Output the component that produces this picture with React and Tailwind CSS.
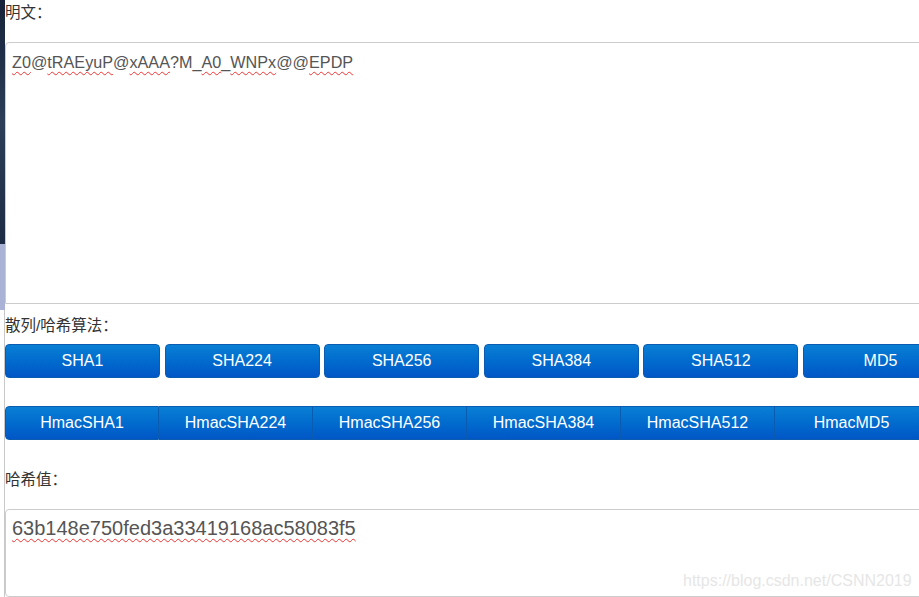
import React from 'react';

const font = { fontFamily: '"Liberation Sans", Arial, "Noto Sans CJK SC", sans-serif' };

const algos = ['SHA1', 'SHA224', 'SHA256', 'SHA384', 'SHA512', 'MD5'];
const hmacs = ['HmacSHA1', 'HmacSHA224', 'HmacSHA256', 'HmacSHA384', 'HmacSHA512', 'HmacMD5'];

// 拼写检查的红色波浪线
const Sq = ({ children }) => (
    <span className="underline decoration-wavy decoration-[#e33] decoration-1 underline-offset-[3px]">{children}</span>
);

const App = () => {
    return (
        <div className="w-[919px] h-[597px] overflow-hidden flex bg-white text-[#333]" style={font}>

            {/* 左侧露出的桌面背景 */}
            <div className="w-[5px] shrink-0 flex flex-col">
                <div className="h-[244px] bg-gradient-to-b from-[#16233a] via-[#2c3e58] to-[#1d2c44]"></div>
                <div className="h-[66px] bg-[#aab3d6]"></div>
                <div className="flex-1 bg-white border-r border-[#c8c8c8]"></div>
            </div>

            <div className="w-[960px] shrink-0 flex flex-col">
                <div className="h-[42px] pt-[3px] text-[15.5px] leading-[20px]">明文：</div>

                <div className="h-[262px] border border-[#cccccc] rounded-tl-[4px] px-[6px] pt-[8px] text-[16.2px] leading-[22px] text-[#555]">
                    <Sq>Z0</Sq>@<Sq>tRAEyuP</Sq>@<Sq>xAAA</Sq>?M_<Sq>A0</Sq>_<Sq>WNPx</Sq>@@<Sq>EPDP</Sq>
                </div>

                <div className="h-[40px] pt-[12px] text-[15.5px] leading-[20px]">散列/哈希算法：</div>

                <div className="flex gap-[4.6px]">
                    {algos.map((a) => (
                        <button
                            key={a}
                            className="w-[155px] h-[34px] shrink-0 rounded-[4px] border border-[#0a5cb0] bg-gradient-to-b from-[#0a7fd5] to-[#0256c6] text-white text-[16px]"
                        >
                            {a}
                        </button>
                    ))}
                </div>

                <div className="h-[28px]"></div>

                <div className="flex">
                    {hmacs.map((h, i) => (
                        <button
                            key={h}
                            className={`w-[154px] h-[34px] shrink-0 border-y border-r border-[#0a5cb0] bg-gradient-to-b from-[#0a7fd5] to-[#0256c6] text-white text-[16px] ${i === 0 ? 'border-l rounded-l-[4px]' : ''}`}
                        >
                            {h}
                        </button>
                    ))}
                </div>

                <div className="h-[69px] pt-[30px] text-[15.5px] leading-[20px]">哈希值：</div>

                <div className="h-[88px] border border-[#cccccc] rounded-l-[4px] px-[6px] pt-[5px] text-[20px] leading-[26px] text-[#555] relative">
                    <Sq>63b148e750fed3a33419168ac58083f5</Sq>
                    <span className="absolute left-[677px] top-[58px] text-[16px] text-[#e6e6e6]">https://blog.csdn.net/CSNN2019</span>
                </div>
            </div>
        </div>
    );
};

export default App;
